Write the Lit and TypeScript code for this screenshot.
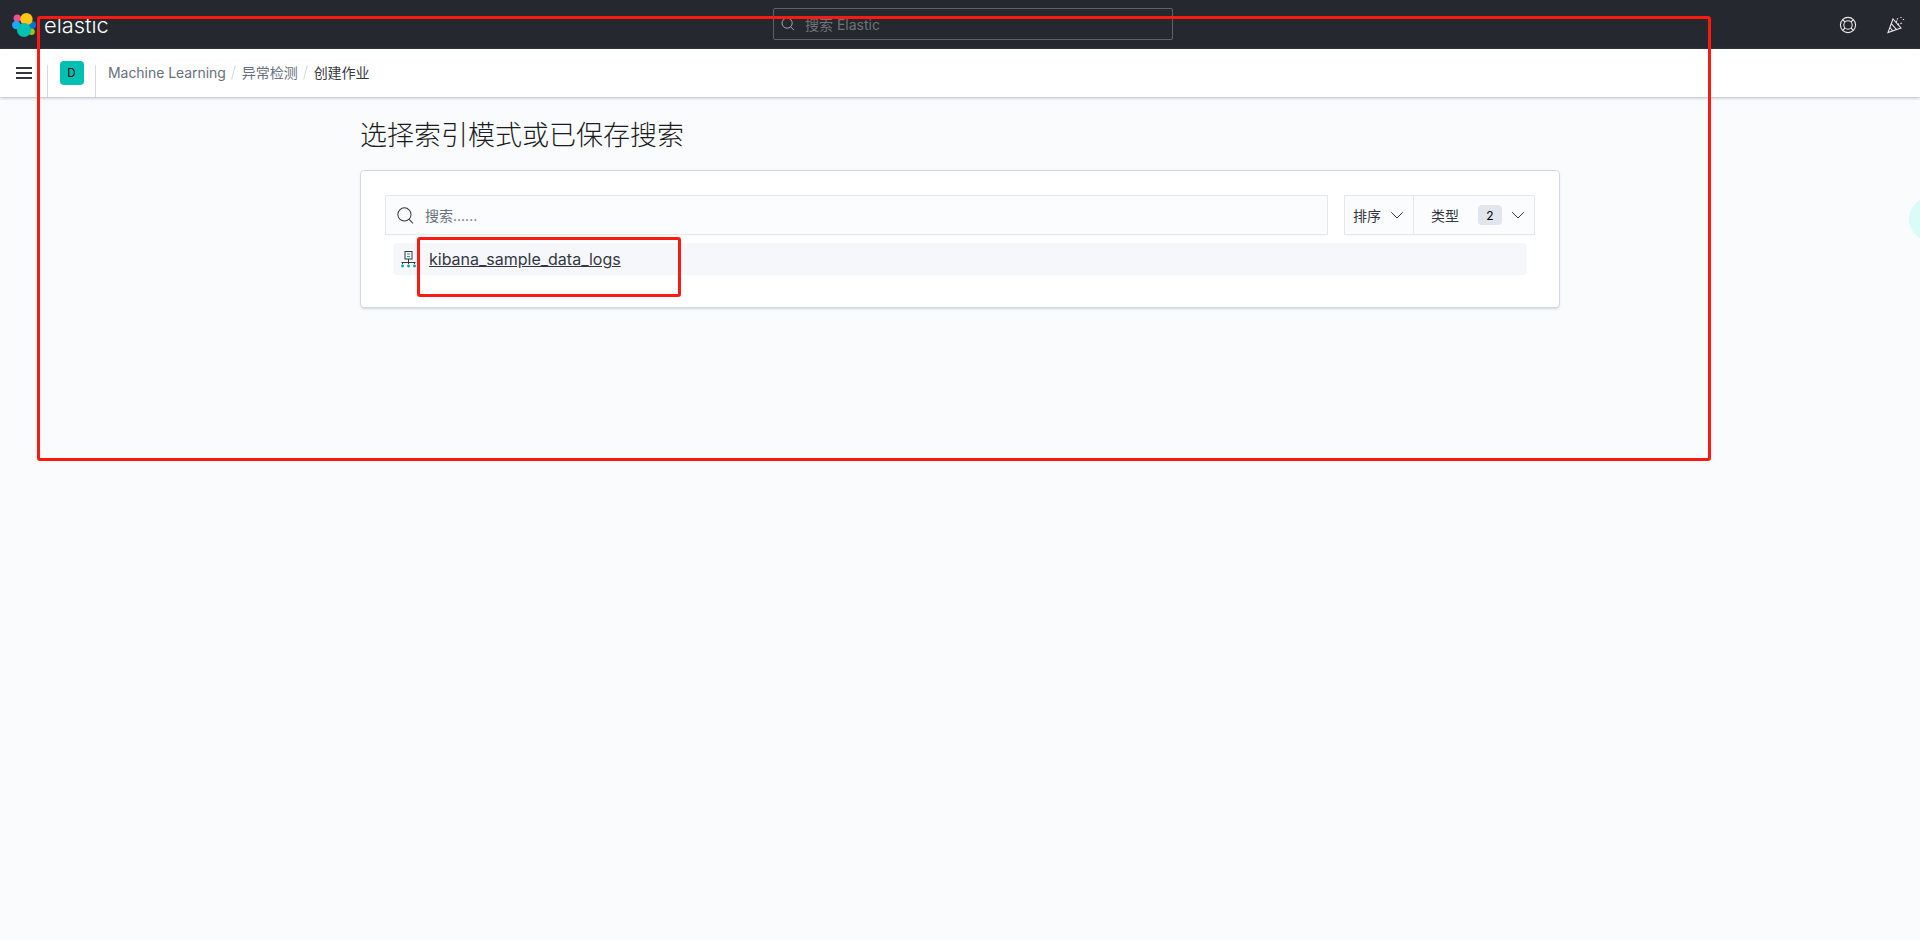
import { LitElement, html, css, svg } from "lit";
import { customElement } from "lit/decorators.js";

const chevron = svg`<path d="M1.5 4.5 L7 10 L12.5 4.5" fill="none" stroke="currentColor" stroke-width="1" stroke-linecap="round" stroke-linejoin="round"/>`;

@customElement("app-root")
export class AppRoot extends LitElement {
  static styles = css`
    :host {
      display: block;
      position: relative;
      min-height: 940px;
      overflow: hidden;
      background: #fafbfd;
      font-family: Inter, "Noto Sans CJK SC", sans-serif;
      color: #343741;
    }
    .top {
      height: 49px;
      background: #25282f;
      display: flex;
      align-items: center;
      box-sizing: border-box;
    }
    .brand {
      width: 773px;
      display: flex;
      align-items: center;
      padding-left: 12px;
      box-sizing: border-box;
      gap: 8px;
      color: #fff;
      font-size: 21.8px;
      font-weight: 300;
    }
    .gsearch {
      width: 400px;
      height: 32px;
      margin-bottom: 1px;
      box-sizing: border-box;
      border: 1px solid #5f6167;
      border-radius: 2px;
      display: flex;
      align-items: center;
      padding-left: 7px;
      gap: 10px;
      color: #6f7278;
      font-size: 14px;
    }
    .gsearch svg { color: #a9abb0; }
    .top-icons {
      margin-left: auto;
      display: flex;
      gap: 30px;
      padding-right: 15px;
      color: #e8e9eb;
    }
    .crumbs {
      height: 48px;
      background: #fff;
      display: flex;
      align-items: center;
      box-shadow: 0 1px 3px rgba(152, 162, 179, 0.55), 0 2px 2px -1px rgba(152, 162, 179, 0.25);
      position: relative;
      font-size: 14px;
    }
    .burger {
      width: 47px;
      display: flex;
      padding-left: 16px;
      box-sizing: border-box;
    }
    .cell {
      align-self: flex-end;
      height: 32px;
      border-left: 1px solid #d3dae6;
    }
    .avatar-cell {
      width: 47px;
      display: flex;
      justify-content: center;
      align-items: flex-start;
    }
    .avatar {
      width: 24px;
      height: 24px;
      margin-top: -4px;
      border-radius: 4px;
      background: #00bfb3;
      color: #000;
      display: flex;
      align-items: center;
      justify-content: center;
      font-size: 11.5px;
    }
    .trail {
      display: flex;
      align-items: center;
      padding: 0 0 2px 12px;
      color: #69707d;
      letter-spacing: -0.05px;
    }
    .sep {
      width: 1px;
      height: 15px;
      margin: 0 8px 0 7px;
      background: #d3dae6;
      transform: rotate(15deg);
    }
    .trail b { font-weight: 400; color: #343741; }
    main {
      width: 1200px;
      margin: 0 auto;
    }
    h1 {
      margin: 0;
      padding-top: 19px;
      font-size: 27px;
      line-height: 40px;
      font-weight: 300;
      color: #1a1c21;
      height: 54px;
    }
    .panel {
      height: 138px;
      box-sizing: border-box;
      background: #fff;
      border: 1px solid #d3dae6;
      border-radius: 4px;
      box-shadow: 0 2px 2px -1px rgba(152, 162, 179, 0.3), 0 1px 5px -2px rgba(152, 162, 179, 0.3);
      padding: 24px;
    }
    .tools { display: flex; gap: 16px; height: 40px; }
    .search {
      flex: 1;
      border: 1px solid #e4e8f0;
      background: #fbfcfd;
      box-shadow: 0 1px 1px -1px rgba(152, 162, 179, 0.4);
      display: flex;
      align-items: center;
      padding-left: 11px;
      gap: 11px;
      font-size: 14px;
      color: #69707d;
    }
    .filters {
      width: 191px;
      box-sizing: border-box;
      border: 1px solid #e4e8f0;
      background: #fbfcfd;
      box-shadow: 0 1px 1px -1px rgba(152, 162, 179, 0.4);
      display: flex;
      font-size: 14px;
    }
    .f {
      display: flex;
      align-items: center;
    }
    .f1 {
      width: 69px;
      padding-left: 8px;
      gap: 9px;
      box-sizing: border-box;
      border-right: 1px solid #e4e8f0;
    }
    .f2 { flex: 1; padding-left: 17px; }
    .badge {
      width: 24px;
      height: 20px;
      margin: 0 9px 0 19px;
      border-radius: 4px;
      background: #e0e5ee;
      color: #000;
      font-size: 12px;
      display: flex;
      align-items: center;
      justify-content: center;
    }
    .row {
      margin: 8px 8px 0 8px;
      height: 32px;
      background: #f5f7fa;
      border-radius: 4px;
      display: flex;
      align-items: center;
      padding-left: 8px;
      gap: 13px;
    }
    .row a {
      font-size: 16px;
      color: #343741;
      text-decoration: underline;
    }
    .blob {
      position: absolute;
      left: 1909px;
      top: 197px;
      width: 44px;
      height: 44px;
      border-radius: 50%;
      background: #dafbf8;
    }
    .mark {
      position: absolute;
      box-sizing: border-box;
      border: 3px solid #fb1a10;
      border-radius: 3px;
      pointer-events: none;
    }
    .m1 { left: 37px; top: 16px; width: 1674px; height: 445px; }
    .m2 { left: 417px; top: 237px; width: 264px; height: 60px; }
  `;

  render() {
    return html`
      <div class="top">
        <div class="brand">
          <svg width="24" height="24" viewBox="0 0 24 24">
            <circle cx="5.2" cy="5.2" r="3.6" fill="#f04e98"/>
            <circle cx="4.2" cy="12" r="4.2" fill="#1ba9f5"/>
            <circle cx="20" cy="12" r="4" fill="#0077cc"/>
            <circle cx="14.4" cy="6.2" r="6.2" fill="#fec514"/>
            <circle cx="19.6" cy="18.8" r="3.2" fill="#93c90e"/>
            <circle cx="12" cy="17" r="7" fill="#00bfb3"/>
          </svg>
          <span>elastic</span>
        </div>
        <div class="gsearch">
          <svg width="14" height="14" viewBox="0 0 16 16" fill="none" stroke="currentColor" stroke-width="1.1"><circle cx="7" cy="7" r="5.8"/><path d="M11 11.2 L14.8 15"/></svg>
          <span>搜索 Elastic</span>
        </div>
        <div class="top-icons">
          <svg width="18" height="18" viewBox="0 0 18 18" fill="none" stroke="currentColor" stroke-width="1.1">
            <circle cx="9" cy="9" r="7.6"/><circle cx="9" cy="9" r="4.2"/>
            <path d="M3.6 3.6 L6 6 M14.4 3.6 L12 6 M3.6 14.4 L6 12 M14.4 14.4 L12 12"/>
          </svg>
          <svg width="18" height="18" viewBox="0 0 18 18" fill="none" stroke="currentColor" stroke-width="1.1">
            <path d="M6 3 L1 16.5 L14 12 Z M4.3 7.5 L9.5 13.6 M2.9 11.5 L5.8 15"/>
            <path d="M9 6.5 C10 5 9.5 3.5 11 2.5 M10.5 9 C12 7 13.5 8.5 15.5 6.5" stroke-dasharray="2 1.2"/>
            <path d="M14 1 v1 M16.5 3 v1" stroke-width="1.2"/>
          </svg>
        </div>
      </div>
      <div class="crumbs">
        <div class="burger">
          <svg width="16" height="12" viewBox="0 0 16 12" fill="#343741"><rect width="16" height="2"/><rect y="5" width="16" height="2"/><rect y="10" width="16" height="2"/></svg>
        </div>
        <div class="cell avatar-cell"><div class="avatar">D</div></div>
        <div class="cell"></div>
        <div class="trail">
          <span>Machine Learning</span><i class="sep"></i><span>异常检测</span><i class="sep"></i><b>创建作业</b>
        </div>
      </div>
      <main>
        <h1>选择索引模式或已保存搜索</h1>
        <section class="panel">
          <div class="tools">
            <div class="search">
              <svg width="17" height="17" viewBox="0 0 16 16" fill="none" stroke="#343741" stroke-width="0.95"><circle cx="7" cy="7" r="6.2"/><path d="M11.4 11.6 L15 15.4"/></svg>
              <span>搜索......</span>
            </div>
            <div class="filters">
              <div class="f f1"><span>排序</span><svg width="14" height="14" viewBox="0 0 14 14" color="#343741">${chevron}</svg></div>
              <div class="f f2"><span>类型</span><span class="badge">2</span><svg width="14" height="14" viewBox="0 0 14 14" color="#343741">${chevron}</svg></div>
            </div>
          </div>
          <div class="row">
            <svg width="15" height="17" viewBox="0 0 15 17" fill="none">
              <rect x="4" y="0.5" width="7" height="7.5" stroke="#343741" stroke-width="1"/>
              <path d="M6 3 H9 M6 5.5 H9" stroke="#00a69b" stroke-width="1"/>
              <path d="M7.5 8 V11.5 M0.5 11.5 H14.5 M1.5 11.5 V13 M7.5 11.5 V13 M13.5 11.5 V13" stroke="#343741" stroke-width="1"/>
              <circle cx="1.5" cy="15" r="1.4" fill="#00a69b"/><circle cx="7.5" cy="15" r="1.4" fill="#00a69b"/><circle cx="13.5" cy="15" r="1.4" fill="#00a69b"/>
            </svg>
            <a href="#">kibana_sample_data_logs</a>
          </div>
        </section>
      </main>
      <div class="blob"></div>
      <div class="mark m1"></div>
      <div class="mark m2"></div>
    `;
  }
}
